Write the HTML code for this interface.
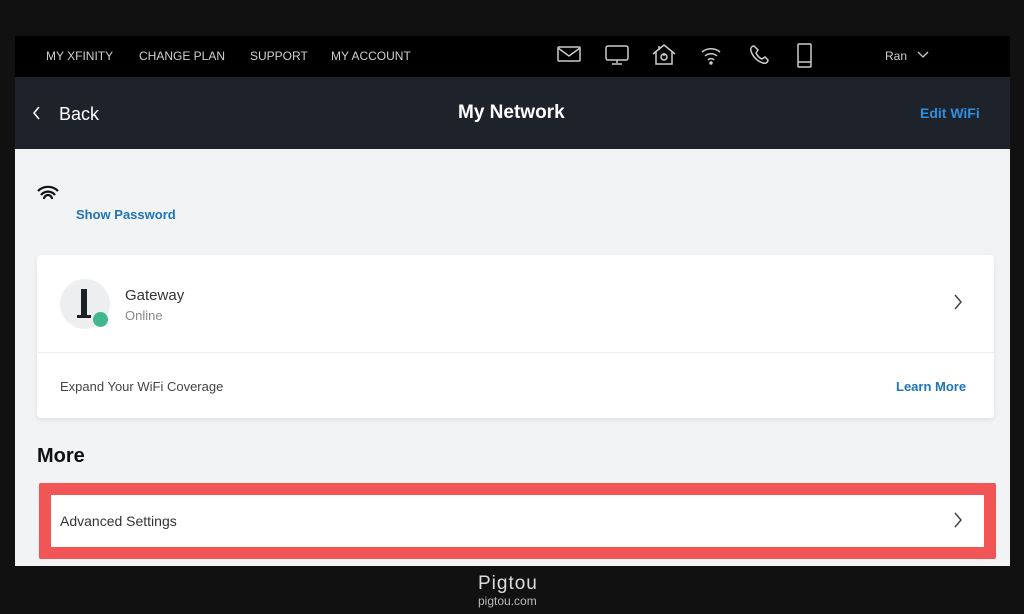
<!DOCTYPE html>
<html><head><style>
*{margin:0;padding:0;box-sizing:border-box}
body{width:1024px;height:614px;background:#111;position:relative;overflow:hidden;font-family:"Liberation Sans",sans-serif}
.a{position:absolute}
.nav{left:15px;top:36px;width:995px;height:41px;background:#000;color:#d0d0d0;font-size:12px}
.nav span{position:absolute;top:13px}
.hdr{left:15px;top:77px;width:995px;height:72px;background:#1e232b;color:#fff}
.body{left:15px;top:149px;width:995px;height:417px;background:#f1f3f5}
.card{left:37px;top:255px;width:957px;height:163px;background:#fff;border-radius:4px;box-shadow:0 2px 6px rgba(0,0,0,.08)}
</style></head><body>
<div class="a nav">
<span style="left:31px">MY XFINITY</span><span style="left:124px">CHANGE PLAN</span><span style="left:235px">SUPPORT</span><span style="left:316px">MY ACCOUNT</span>
<svg class="a" style="left:540px;top:6px" width="270" height="30" fill="none" stroke="#ccc" stroke-width="1.5">
<rect x="3" y="5" width="22" height="14" rx="1"/><path d="M3 6l11 8 11-8"/>
<rect x="51" y="4" width="22" height="14" rx="2"/><path d="M62 18v3M57 22h10"/>
<path d="M98 12l11-9 11 9M101 10v12h16V10M104 4v4"/><circle cx="109" cy="15" r="3"/><path d="M109 11v3"/>
<path d="M147 10a14 14 0 0 1 18 0M150 14a9 9 0 0 1 12 0M153 18a4 4 0 0 1 6 0"/><circle cx="156" cy="21" r="1" fill="#ccc"/>
<path d="M199 4c-2 0-4 2-3 5 2 6 6 10 12 12 3 1 5-1 5-3l-3-3-3 2c-3-1-5-4-6-6l2-3z"/>
<rect x="243" y="2" width="13" height="23" rx="1"/><path d="M243 20h13"/>
</svg>
<span style="left:870px">Ran</span>
<svg class="a" style="left:902px;top:15px" width="12" height="8" fill="none" stroke="#ccc" stroke-width="1.3"><path d="M1 1l5 5 5-5"/></svg>
</div>
<div class="a hdr">
<svg class="a" style="left:17px;top:29px" width="10" height="14" fill="none" stroke="#fff" stroke-width="1.5"><path d="M7 1L2 7l5 6"/></svg>
<span class="a" style="left:44px;top:27px;font-size:18px">Back</span>
<span class="a" style="left:443px;top:25px;font-size:19px;font-weight:bold">My Network</span>
<span class="a" style="left:905px;top:28px;font-size:14px;font-weight:bold;color:#2f8fe0">Edit WiFi</span>
</div>
<div class="a body"></div>
<svg class="a" style="left:36px;top:184px" width="26" height="18" fill="none" stroke="#111" stroke-width="2.2"><path d="M2 7a14 14 0 0 1 20 0M5 11a9 9 0 0 1 14 0M8 15a4 4 0 0 1 8 0"/></svg>
<span class="a" style="left:76px;top:207px;font-size:13px;font-weight:bold;color:#1f73b7">Show Password</span>
<div class="a card">
<div class="a" style="left:23px;top:24px;width:50px;height:50px;border-radius:50%;background:#eceeef"></div>
<div class="a" style="left:44px;top:34px;width:6px;height:28px;background:#1c2027"></div>
<div class="a" style="left:40px;top:60px;width:14px;height:3px;background:#1c2027"></div>
<div class="a" style="left:56px;top:57px;width:15px;height:15px;border-radius:50%;background:#43b88e"></div>
<span class="a" style="left:88px;top:32px;font-size:15px;color:#333">Gateway</span>
<span class="a" style="left:88px;top:53px;font-size:13px;color:#888">Online</span>
<svg class="a" style="left:916px;top:39px" width="10" height="16" fill="none" stroke="#444" stroke-width="1.5"><path d="M2 1l6 7-6 7"/></svg>
<div class="a" style="left:0;top:97px;width:957px;height:1px;background:#eceeef"></div>
<span class="a" style="left:23px;top:124px;font-size:13px;color:#444">Expand Your WiFi Coverage</span>
<span class="a" style="left:859px;top:124px;font-size:13px;font-weight:bold;color:#1f73b7">Learn More</span>
</div>
<span class="a" style="left:37px;top:445px;font-size:20px;font-weight:bold;color:#111">More</span>
<div class="a" style="left:39px;top:483px;width:957px;height:76px;background:#f25555;border-radius:2px"></div>
<div class="a" style="left:51px;top:495px;width:933px;height:52px;background:#fff"></div>
<span class="a" style="left:60px;top:513px;font-size:14px;color:#333">Advanced Settings</span>
<svg class="a" style="left:953px;top:512px" width="10" height="16" fill="none" stroke="#444" stroke-width="1.5"><path d="M2 1l6 7-6 7"/></svg>
<span class="a" style="left:478px;top:573px;font-size:19px;color:#ddd;letter-spacing:1px">Pigtou</span>
<span class="a" style="left:478px;top:594px;font-size:12px;color:#bbb">pigtou.com</span>
</body></html>
